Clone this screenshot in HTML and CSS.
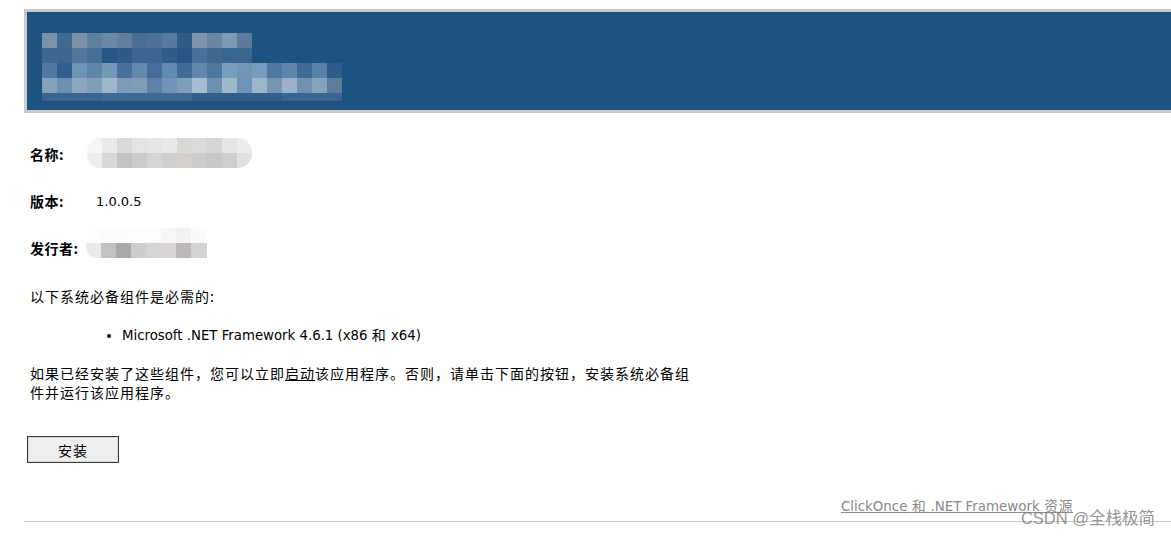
FILE: index.html
```html
<!DOCTYPE html>
<html lang="zh-CN">
<head>
<meta charset="utf-8">
<title>ClickOnce</title>
<link rel="stylesheet" href="styles.css">
</head>
<body>
<header class="banner">
  <div class="mosaic">
    <div class="mrow r1"></div>
    <div class="mrow r2"></div>
    <div class="mrow r3"></div>
    <div class="mrow r4"></div>
    <div class="mrow r5"></div>
  </div>
</header>
<main class="content">
  <div class="info">
    <div class="info-row">
      <span class="label">名称:</span>
      <span class="blur blur-name"><span class="brow n1"></span><span class="brow n2"></span></span>
    </div>
    <div class="info-row">
      <span class="label">版本:</span>
      <span class="value">1.0.0.5</span>
    </div>
    <div class="info-row">
      <span class="label label-pub">发行者:</span>
      <span class="blur blur-pub"><span class="brow p1"></span><span class="brow p2"></span></span>
    </div>
  </div>
  <p class="req">以下系统必备组件是必需的:</p>
  <ul class="prereq">
    <li>Microsoft .NET Framework 4.6.1 (x86 <span class="cjk">和</span> x64)</li>
  </ul>
  <p class="desc">如果已经安装了这些组件，您可以立即<a href="#" class="launch">启动</a>该应用程序。否则，请单击下面的按钮，安装系统必备组件并运行该应用程序。</p>
  <button class="install" type="button">安装</button>
</main>
<footer class="footer">
  <a href="#" class="res">ClickOnce <span class="cjk">和</span> .NET Framework <span class="cjk">资源</span></a>
</footer>
<hr class="rule">
<div class="watermark">CSDN @全栈极简</div>
</body>
</html>
```
FILE: styles.css
```css
html, body {
  margin: 0;
  padding: 0;
  background: #fff;
}
body {
  position: relative;
  font-family: "DejaVu Sans", "Noto Sans CJK SC", sans-serif;
  font-size: 12px;
  color: #000;
  min-height: 537px;
  overflow: hidden;
}
.banner {
  margin: 9px 0 0 24px;
  background: #1e5380;
  border: 3px solid #cacaca;
  border-right: none;
  padding: 21px 0 0 15px;
  height: 77px;
}
.mosaic {
  display: flex;
  flex-direction: column;
}
.mrow { height: 15px; }
.r1 {
  width: 210px;
  background: linear-gradient(to right,
    #7a93ab 0 15px, #3f6a92 15px 30px, #7d90a8 30px 45px, #5f81a0 45px 60px,
    #6a89a5 60px 75px, #62809e 75px 90px, #486e94 90px 105px, #4e7297 105px 120px,
    #577b9e 120px 135px, #2e5c88 135px 150px, #7f95ad 150px 165px, #6a86a2 165px 180px,
    #7d98b1 180px 195px, #5f7b9a 195px 210px);
}
.r2 {
  width: 210px;
  background: linear-gradient(to right,
    #3d6690 0 15px, #3c6690 15px 30px, #53769a 30px 45px, #476e94 45px 60px,
    #25568a 60px 75px, #2c5b88 75px 90px, #3a6590 90px 105px, #3c6690 105px 120px,
    #2f5d89 120px 135px, #24548a 135px 150px, #4a7097 150px 165px, #3f6891 165px 180px,
    #386690 180px 195px, #3b668d 195px 210px);
}
.r3 {
  width: 300px;
  background: linear-gradient(to right,
    #5079a0 0 15px, #2e5f8e 15px 30px, #6d93b5 30px 45px, #5f86aa 45px 60px,
    #7698b8 60px 75px, #47719a 75px 90px, #6588ad 90px 105px, #426e99 105px 120px,
    #5f8cb0 120px 135px, #3f6b96 135px 150px, #6188ad 150px 165px, #4a78a0 165px 180px,
    #7b9dbd 180px 195px, #6f95b8 195px 210px, #789cbb 210px 225px, #4f78a0 225px 240px,
    #5f86aa 240px 255px, #3f6b96 255px 270px, #5881a8 270px 285px, #2f5d89 285px 300px);
}
.r4 {
  width: 300px;
  background: linear-gradient(to right,
    #86a2bb 0 15px, #6d8fb0 15px 30px, #8ea7c0 30px 45px, #7f9eba 45px 60px,
    #9fb5ca 60px 75px, #7d9ab6 75px 90px, #7f9db8 90px 105px, #5c82a8 105px 120px,
    #6f94b8 120px 135px, #7e9fbb 135px 150px, #a6bccf 150px 165px, #6b90b2 165px 180px,
    #a0b8cd 180px 195px, #6f93b6 195px 210px, #9db5cb 210px 225px, #7694b1 225px 240px,
    #9ab2c9 240px 255px, #7190b0 255px 270px, #86a3bd 270px 285px, #5d7d9d 285px 300px);
}
.r5 {
  width: 300px;
  height: 8px;
  background: linear-gradient(to right,
    #3a6590 0 60px, #3f6a94 60px 150px, #355f8b 150px 240px, #3a6590 240px 300px);
}

.content {
  padding: 0 0 0 30px;
}
.info {
  display: flex;
  flex-direction: column;
  gap: 27px;
  margin-top: 31px;
}
.info-row {
  display: flex;
  align-items: center;
  height: 20px;
  font-size: 13px;
}
.label {
  width: 66px;
  font-weight: bold;
  font-family: "Noto Sans CJK SC", sans-serif;
  font-size: 14px;
  letter-spacing: 0.5px;
}
.label-pub { width: 55px; }
.value {
  font-size: 13px;
}
.blur {
  display: flex;
  flex-direction: column;
  overflow: hidden;
}
.brow { display: block; height: 15px; }
.blur-name {
  width: 165px;
  margin-left: -9px;
  margin-top: -2px;
  border-radius: 14px;
}
.n1 {
  background: linear-gradient(to right,
    #f5f5f5 0 15px, #e9eaea 15px 30px, #d9d9da 30px 45px, #e3e3e4 45px 60px,
    #e6e5e8 60px 75px, #ebe9e8 75px 90px, #d8d6d7 90px 105px, #dcdadc 105px 120px,
    #d5d4d5 120px 135px, #e4e5e5 135px 150px, #eceeee 150px 165px);
}
.n2 {
  background: linear-gradient(to right,
    #eeeeee 0 15px, #d7d9d9 15px 30px, #c4c2c4 30px 45px, #cbcbcb 45px 60px,
    #d5d5d5 60px 75px, #d0cdce 75px 90px, #d2cfcd 90px 105px, #cdcbcc 105px 120px,
    #c9c8c9 120px 135px, #cdcecf 135px 150px, #dfe1e3 150px 165px);
}
.blur-pub {
  width: 121px;
  margin-left: 1px;
  margin-top: -11px;
  border-radius: 10px 0 0 10px;
}
.p1 {
  background: linear-gradient(to right,
    #fcfdfd 0 15px, #fafcfc 15px 30px, #fbfdfd 30px 45px, #fdfdfd 45px 60px,
    #fdfdfd 60px 75px, #f6f6f6 75px 90px, #f1f1f1 90px 105px, #fafafa 105px 121px);
}
.p2 {
  background: linear-gradient(to right,
    #ebeaea 0 15px, #c0c2c2 15px 30px, #a9a9a9 30px 45px, #cdcdcd 45px 60px,
    #d4d4d4 60px 75px, #d8d4d8 75px 90px, #bcb8b9 90px 105px, #d3d3d3 105px 121px);
}

.cjk {
  font-family: "Noto Sans CJK SC", sans-serif;
  font-size: 14px;
  letter-spacing: 1px;
}
.req {
  margin: 28px 0 0;
  line-height: 20px;
  font-family: "Noto Sans CJK SC", sans-serif;
  font-size: 14px;
  letter-spacing: 1px;
}
.prereq {
  margin: 18px 0 0;
  padding-left: 92px;
  line-height: 20px;
  font-size: 13.3px;
}
.desc {
  margin: 18px 0 0;
  width: 668px;
  line-height: 19px;
  font-family: "Noto Sans CJK SC", sans-serif;
  font-size: 14px;
  letter-spacing: 1px;
}
.launch {
  color: #000;
  text-decoration: underline;
}
.install {
  display: block;
  margin: 34px 0 0 -3px;
  width: 92px;
  height: 27px;
  background: #efefef;
  border: 1px solid #3a3a3a;
  box-shadow: inset 0 0 0 1px #d8d8d8;
  font-family: "Noto Sans CJK SC", sans-serif;
  font-size: 14px;
  letter-spacing: 1px;
  color: #000;
  padding: 0;
}
.footer {
  display: flex;
  justify-content: flex-end;
  padding-right: 98px;
  margin-top: 33px;
  line-height: 18px;
}
.res {
  color: #8a8a8a;
  font-size: 13.4px;
  text-decoration: underline;
}
.res .cjk { font-size: 14px; letter-spacing: 0.5px; }
.rule {
  margin: 5px 0 0 24px;
  border: none;
  border-top: 1px solid #c8c8c8;
  height: 0;
}
.watermark {
  position: absolute;
  right: 16px;
  top: 507px;
  font-family: "Liberation Sans", "Noto Sans CJK SC", sans-serif;
  font-size: 16.5px;
  color: rgba(130, 130, 130, 0.85);
  line-height: 22px;
}
```
